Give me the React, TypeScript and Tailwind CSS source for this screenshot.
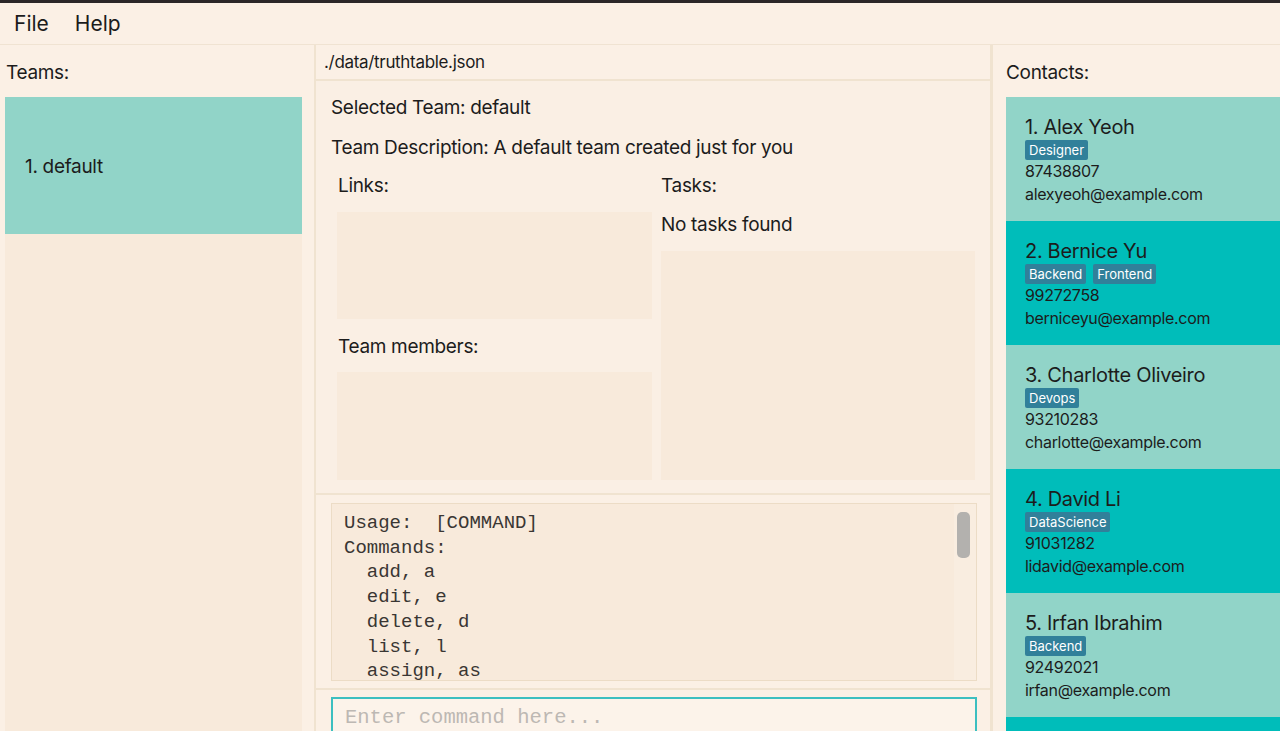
import { FunctionComponent, JSX } from "react";

type Contact = {
  name: string;
  tags: string[];
  phone: string;
  email: string;
};

const contacts: Contact[] = [
  { name: "1. Alex Yeoh", tags: ["Designer"], phone: "87438807", email: "alexyeoh@example.com" },
  { name: "2. Bernice Yu", tags: ["Backend", "Frontend"], phone: "99272758", email: "berniceyu@example.com" },
  { name: "3. Charlotte Oliveiro", tags: ["Devops"], phone: "93210283", email: "charlotte@example.com" },
  { name: "4. David Li", tags: ["DataScience"], phone: "91031282", email: "lidavid@example.com" },
  { name: "5. Irfan Ibrahim", tags: ["Backend"], phone: "92492021", email: "irfan@example.com" },
];

const helpLines = [
  "Usage:  [COMMAND]",
  "Commands:",
  "  add, a",
  "  edit, e",
  "  delete, d",
  "  list, l",
  "  assign, as",
];

const ContactCard: FunctionComponent<{ contact: Contact; index: number }> = ({
  contact,
  index,
}): JSX.Element => {
  return (
    <div
      className={`relative w-full h-[124px] shrink-0 flex flex-col pl-[19px] pt-[18px] text-[#1c1c1c] ${
        index % 2 === 0 ? "bg-[#91d4c8]" : "bg-[#00bdba]"
      }`}
    >
      <div className="text-[20px] leading-[24px]">{contact.name}</div>
      <div className="flex flex-row gap-[7px] mt-[1px]">
        {contact.tags.map((tag) => (
          <div
            key={tag}
            className="h-[20px] px-[4px] rounded-[2px] bg-[#31809a] text-white text-[13px] leading-[20px] tracking-normal"
          >
            {tag}
          </div>
        ))}
      </div>
      <div className="text-[16px] leading-[23px]">{contact.phone}</div>
      <div className="text-[16px] leading-[23px]">{contact.email}</div>
    </div>
  );
};

const App: FunctionComponent = (): JSX.Element => {
  return (
    <div className="w-[1280px] h-[731px] overflow-hidden flex flex-col bg-[#fbf0e5] text-[#1c1c1c] tracking-[-0.02em] font-['Inter','Noto_Sans',sans-serif]">
      <div className="h-[3px] w-full bg-[#2b2628] shrink-0"></div>
      <div className="h-[42px] shrink-0 flex flex-row items-center gap-[26px] pl-[14px] border-b border-[#f0e3d2] text-[21px] tracking-normal">
        <div>File</div>
        <div>Help</div>
      </div>
      <div className="flex-1 min-h-0 flex flex-row">
        {/* teams */}
        <div className="w-[316px] shrink-0 flex flex-col border-r-2 border-[#f0e3d0] px-[5px]">
          <div className="h-[52px] shrink-0 flex items-center pt-[5px] pl-[1px] text-[19px]">Teams:</div>
          <div className="flex-1 w-[297px] bg-[#f8eadb]">
            <div className="h-[137px] bg-[#91d4c8] flex items-center pt-[3px] pl-[20px] text-[19px]">
              1. default
            </div>
          </div>
        </div>

        {/* middle */}
        <div className="flex-1 min-w-0 flex flex-col">
          <div className="h-[36px] shrink-0 flex items-center pt-[2px] pl-[8px] text-[17px] border-b-2 border-[#f0e3d0]">
            ./data/truthtable.json
          </div>
          <div className="h-[414px] shrink-0 flex flex-col px-[15px] pt-[15px] border-b-2 border-[#f0e3d0] bg-[#faefe4]">
            <div className="text-[19px] leading-[24px]">Selected Team: default</div>
            <div className="text-[19px] leading-[24px] mt-[16px]">
              Team Description: A default team created just for you
            </div>
            <div className="grid grid-cols-2 gap-[8px] ml-[6px] mt-[14px] text-[19px]">
              <div className="flex flex-col">
                <div className="h-[38px] leading-[24px] pl-[1px]">Links:</div>
                <div className="h-[107px] bg-[#f8eadb]"></div>
                <div className="h-[53px] pt-[16px] leading-[24px] pl-[1px]">Team members:</div>
                <div className="h-[108px] bg-[#f8eadb]"></div>
              </div>
              <div className="flex flex-col pl-[1px]">
                <div className="h-[39px] leading-[24px]">Tasks:</div>
                <div className="h-[38px] leading-[24px]">No tasks found</div>
                <div className="h-[229px] bg-[#f8eadb]"></div>
              </div>
            </div>
          </div>
          <div className="h-[195px] shrink-0 flex px-[15px] pr-[13px] pt-[8px] pb-[7px] border-b-2 border-[#f0e3d0]">
            <div className="relative flex-1 border border-[#ecdcc6] bg-[#f8eadb] overflow-hidden pl-[12px] pt-[7px]">
              {helpLines.map((line) => (
                <div
                  key={line}
                  className="whitespace-pre text-[19px] leading-[24.7px] tracking-normal text-[#3a3633] font-['Liberation_Mono','Courier_New',monospace]"
                >
                  {line}
                </div>
              ))}
              <div className="absolute top-0 right-0 w-[22px] h-full bg-[#f9ede0]"></div>
              <div className="absolute top-[8px] right-[6px] w-[13px] h-[46px] rounded-[5px] bg-[#b3b1ae]"></div>
            </div>
          </div>
          <div className="flex-1 flex px-[15px] pr-[13px] pt-[7px]">
            <div className="flex-1 h-[44px] border-2 border-[#3cbfc0] bg-[#fcf3ea] pl-[12px] pt-[5px] flex items-start text-[20.5px] leading-[28px] tracking-normal text-[#bdb8b3] font-['Liberation_Mono','Courier_New',monospace]">
              Enter command here...
            </div>
          </div>
        </div>

        {/* contacts */}
        <div className="w-[290px] shrink-0 flex flex-col border-l-[3px] border-[#f0e3d0] pl-[13px] overflow-hidden">
          <div className="h-[52px] shrink-0 flex items-center pt-[4px] text-[19px]">Contacts:</div>
          <div className="flex-1 flex flex-col overflow-hidden">
            {contacts.map((c, i) => (
              <ContactCard key={c.name} contact={c} index={i} />
            ))}
            <div className="w-full h-[124px] shrink-0 bg-[#00bdba]"></div>
          </div>
        </div>
      </div>
    </div>
  );
};

export default App;
